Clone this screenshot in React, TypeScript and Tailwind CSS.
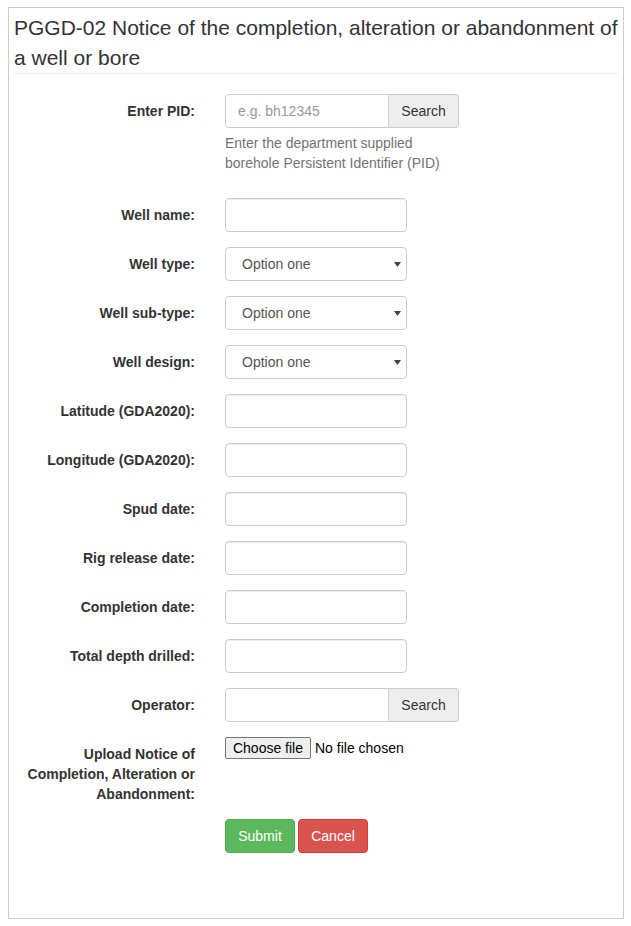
const font = { fontFamily: '"Liberation Sans", Arial, sans-serif' }

function Label({ children }: { children: React.ReactNode }) {
  return (
    <div className="w-[186px] shrink-0 pl-[15px] pt-[7px] text-right text-[14px] font-bold leading-[20px] text-[#333]">
      {children}
    </div>
  )
}

function TextInput() {
  return (
    <div className="h-[34px] w-[182px] rounded-[4px] border border-[#ccc] bg-white shadow-[inset_0_1px_1px_rgba(0,0,0,0.075)]" />
  )
}

function SelectBox() {
  return (
    <div className="relative flex h-[34px] w-[182px] items-center rounded-[4px] border border-[#ccc] bg-white pl-[16px] text-[14px] text-[#555]">
      Option one
      <svg className="absolute right-[5px] top-[14px]" width="7" height="5" viewBox="0 0 7 5">
        <path d="M0 0h7L3.5 5z" fill="#444" />
      </svg>
    </div>
  )
}

function SearchGroup({ placeholder }: { placeholder?: string }) {
  return (
    <div className="flex h-[34px] w-[234px]">
      <div className="flex h-full w-[164px] items-center rounded-l-[4px] border border-[#ccc] bg-white px-[12px] text-[14px] text-[#999]">
        {placeholder}
      </div>
      <div className="flex h-full w-[70px] items-center justify-center rounded-r-[4px] border border-l-0 border-[#ccc] bg-[#eee] text-[14px] text-[#333]">
        Search
      </div>
    </div>
  )
}

export default function App() {
  const rows: { label: string; kind: 'text' | 'select' }[] = [
    { label: 'Well name:', kind: 'text' },
    { label: 'Well type:', kind: 'select' },
    { label: 'Well sub-type:', kind: 'select' },
    { label: 'Well design:', kind: 'select' },
    { label: 'Latitude (GDA2020):', kind: 'text' },
    { label: 'Longitude (GDA2020):', kind: 'text' },
    { label: 'Spud date:', kind: 'text' },
    { label: 'Rig release date:', kind: 'text' },
    { label: 'Completion date:', kind: 'text' },
    { label: 'Total depth drilled:', kind: 'text' },
  ]

  return (
    <div className="min-h-[926px] bg-white pl-[8px] pt-[7px]" style={font}>
      <div className="w-[616px] border border-[#ccc] px-[5px] pb-[65px] pt-[5px]">
        <h3 className="border-b border-[#eee] text-[21px] font-normal leading-[30px] text-[#333]">
          PGGD-02 Notice of the completion, alteration or abandonment of a well or bore
        </h3>

        <div className="-mx-[5px] pt-[20px]">
          {/* PID */}
          <div className="mb-[15px] flex">
            <Label>Enter PID:</Label>
            <div className="ml-[30px]">
              <SearchGroup placeholder="e.g. bh12345" />
              <p className="mb-[10px] mt-[5px] w-[234px] text-[14px] leading-[20px] text-[#737373]">
                Enter the department supplied borehole Persistent Identifier (PID)
              </p>
            </div>
          </div>

          {rows.map((r) => (
            <div key={r.label} className="mb-[15px] flex">
              <Label>{r.label}</Label>
              <div className="ml-[30px]">
                {r.kind === 'select' ? <SelectBox /> : <TextInput />}
              </div>
            </div>
          ))}

          <div className="mb-[15px] flex">
            <Label>Operator:</Label>
            <div className="ml-[30px]">
              <SearchGroup />
            </div>
          </div>

          <div className="mb-[15px] flex">
            <Label>Upload Notice of Completion, Alteration or Abandonment:</Label>
            <div className="ml-[30px] flex h-[22px] items-center text-[14px] text-black">
              <span className="flex h-[22px] w-[86px] items-center justify-center rounded-[2px] border border-[#767676] bg-[#efefef]">
                Choose file
              </span>
              <span className="ml-[4px]">No file chosen</span>
            </div>
          </div>

          <div className="ml-[216px] flex gap-[3px]">
            <button className="h-[34px] w-[70px] rounded-[4px] border border-[#4cae4c] bg-[#5cb85c] text-[14px] text-white">
              Submit
            </button>
            <button className="h-[34px] w-[70px] rounded-[4px] border border-[#d43f3a] bg-[#d9534f] text-[14px] text-white">
              Cancel
            </button>
          </div>
        </div>
      </div>
    </div>
  )
}
